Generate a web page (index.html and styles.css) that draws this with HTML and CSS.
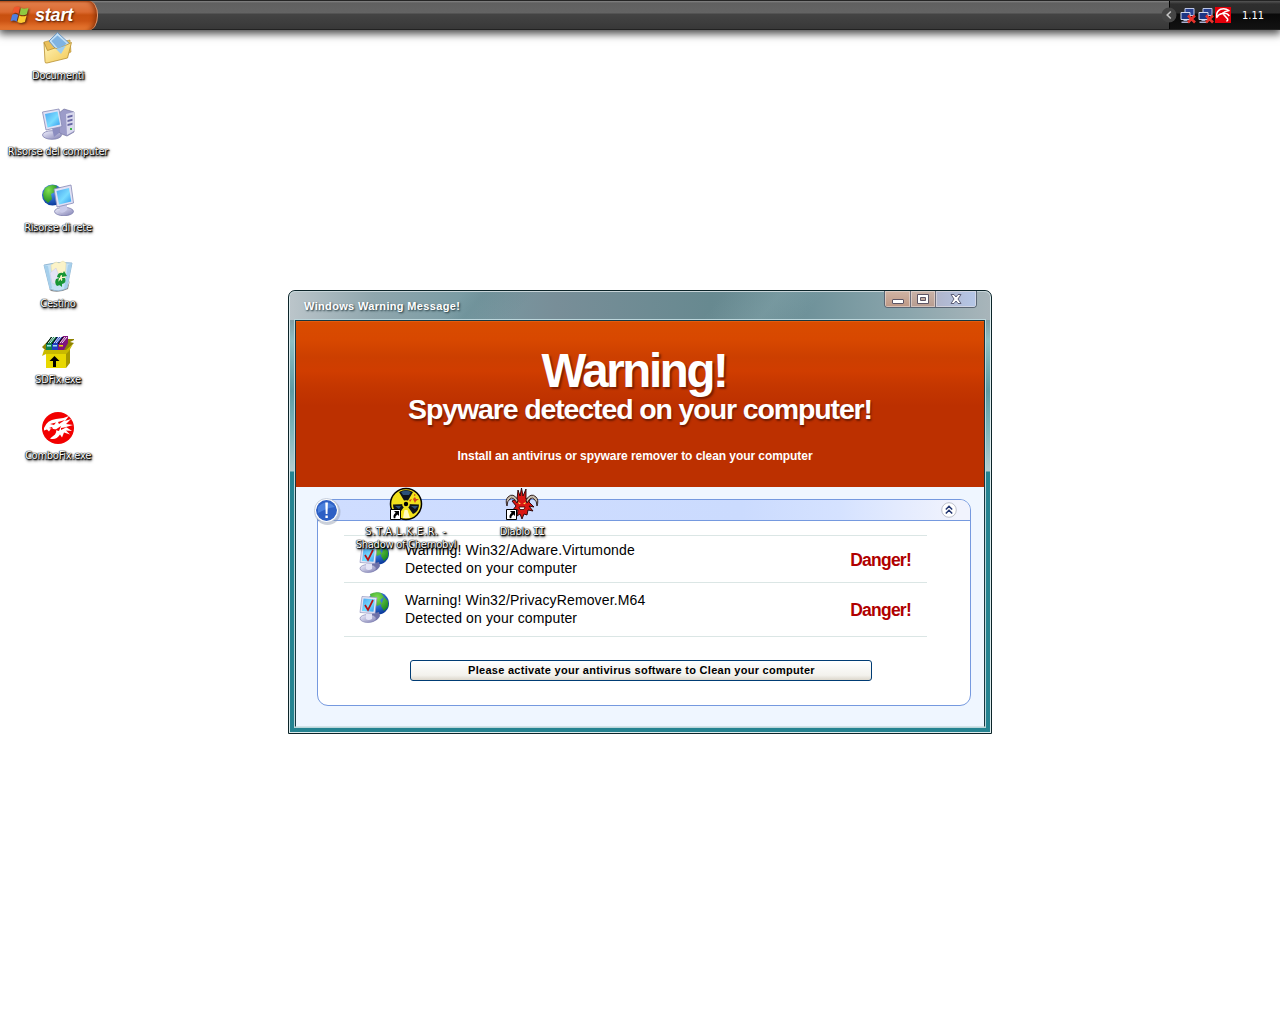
FILE: index.html
```html
<!DOCTYPE html>
<html lang="it">
<head>
<meta charset="utf-8">
<title>Desktop</title>
<link rel="stylesheet" href="styles.css">
</head>
<body>
<svg class="defs" width="0" height="0" aria-hidden="true">
  <defs>
    <linearGradient id="screen" x1="0" y1="0" x2="1" y2="1"><stop offset="0" stop-color="#4aa6f0"/><stop offset=".55" stop-color="#79dcff"/><stop offset="1" stop-color="#2f98ee"/></linearGradient>
    <linearGradient id="metal" x1="0" y1="0" x2="1" y2="1"><stop offset="0" stop-color="#f4f4ff"/><stop offset="1" stop-color="#8080b4"/></linearGradient>
    <radialGradient id="globe" cx=".4" cy=".3" r=".7"><stop offset="0" stop-color="#58a4ff"/><stop offset="1" stop-color="#0a3a9c"/></radialGradient>
    <radialGradient id="land" cx=".4" cy=".3" r=".8"><stop offset="0" stop-color="#7fe04f"/><stop offset="1" stop-color="#17841f"/></radialGradient>
    <linearGradient id="folder" x1="0" y1="0" x2="1" y2="1"><stop offset="0" stop-color="#fff6bd"/><stop offset="1" stop-color="#f2c650"/></linearGradient>
    <symbol id="tray-net" viewBox="0 0 17 17">
      <path d="M5.500 1.500h9v7h-9z" fill="#27408f" stroke="#bcc5e4"/>
      <path d="M7 10h6v1H7z" fill="#9aa2c8"/>
      <path d="M1.500 5.500h9v7h-9z" fill="#1d3684" stroke="#d3d9ef"/>
      <path d="M4 13h4v1H4zM2 14.500h8v1.500H2z" fill="#a9b0d2"/>
      <path d="M8.500 8.500l7 7m0-7l-7 7" stroke="#e8332c" stroke-width="2.600"/>
    </symbol>
    <symbol id="globe-check" viewBox="0 0 32 32">
      <circle cx="20" cy="12.500" r="11" fill="url(#globe)"/>
      <path d="M12 3q6-3 11-1l3 4-4 3 2 4-5 2-5-4zM26 6l4 4v6l-4 4-3-5z" fill="url(#land)"/>
      <path d="M12 23l9-2 1 4q-2 5-9 6z" fill="#6d71a8"/>
      <ellipse cx="10" cy="27.500" rx="8" ry="4" fill="url(#metal)" stroke="#8587b5" stroke-width=".7"/>
      <path d="M8 20h6v8q-4 2-6 0z" fill="#e4e4f6"/>
      <path d="M4 5.500l15 1-2 16-15-1z" fill="#e5e6f6" stroke="#9294bd" stroke-width=".7"/>
      <path d="M5.500 7.500l11.500.7-1.500 12.500-11.500-.8z" fill="url(#screen)"/>
      <path d="M7 14l3 5 5-10" fill="none" stroke="#b71212" stroke-width="1.700"/>
    </symbol>
    <symbol id="shortcut" viewBox="0 0 11 11">
      <path d="M.5.5h10v10H.5z" fill="#fff" stroke="#000"/>
      <path d="M4 2h5v5L7.400 5.400Q5 7 5.300 9.200H3.800Q2.600 6 5.700 3.700z" fill="#000"/>
    </symbol>
  </defs>
</svg>

<header class="taskbar">
  <div class="start">
    <svg class="flag" width="20" height="18" viewBox="0 0 20 18">
      <path d="M4 1.500Q7.500-.5 10 1.500L8.500 8Q6 6 2.500 7.500z" fill="#f0562c"/>
      <path d="M11 2q3 1.600 7.500-.3L16.800 8.300q-3.700 1.700-7.300.1z" fill="#8fc940"/>
      <path d="M2.200 8.700q3.300-1.700 6 .2L6.600 15.700Q4 13.600.5 15.300z" fill="#4f7fe0"/>
      <path d="M9.200 9.500q3.600 1.700 7.400 0l-1.700 6.600q-4 1.700-7.500-.2z" fill="#fccb31"/>
    </svg>
    <span class="start-label">start</span>
  </div>
  <div class="tray">
    <svg class="chevron" width="16" height="16" viewBox="0 0 16 16"><circle cx="8" cy="8" r="7.500" fill="#454545"/><path d="M9.800 4.500L6.200 8l3.600 3.500" fill="none" stroke="#c4c4c4" stroke-width="1.600"/></svg>
    <svg width="18" height="17"><use href="#tray-net"/></svg>
    <svg width="18" height="17"><use href="#tray-net"/></svg>
    <svg width="16" height="16" viewBox="0 0 16 16"><path d="M0 0h16v16H0z" fill="#e2000b"/><path d="M1.800 10.500Q.8 4.500 5.500 2.300 10 .8 14 3.500 9.500 4.300 7.300 6.500 3.500 7 1.800 10.500z" fill="none" stroke="#fff" stroke-width="1.500" stroke-linejoin="round"/><path d="M7.300 6.500Q12 5.500 14.300 9M8 6.800l4.600 5.200q.6 1.800-1.300 2" fill="none" stroke="#fff" stroke-width="1.500"/></svg>
    <span class="clock">1.11</span>
  </div>
</header>

<nav class="icons">
  <div class="icon">
    <svg width="32" height="32" viewBox="0 0 32 32">
      <path d="M2 10l8-2 4 3 14-3 1 12-22 10z" fill="#eac05a" stroke="#b58d31" stroke-width=".6"/>
      <path d="M15.500.7L28 12 18 22 7 9z" fill="#c3e0f6" stroke="#5f8fc0" stroke-width=".9"/>
      <path d="M15.500 3.500l9 8-7 7-8-9.500z" fill="#7fb3e2"/>
      <path d="M2 10.500l3.500 8L13 16l3 1 13.500-6.500-4 15.500L5 31q-2 .5-2-1.500z" fill="url(#folder)" stroke="#b88f31" stroke-width=".8"/>
      <path d="M14 17l10-3.500L19 22z" fill="#9ccdf0"/>
    </svg>
    <span class="label">Documenti</span>
  </div>
  <div class="icon">
    <svg width="34" height="32" viewBox="0 0 34 32">
      <path d="M18 5l5-4 10 3v20l-7 4-8-3z" fill="#9c9cc9" stroke="#74749f" stroke-width=".7"/>
      <path d="M25 6l8-2v19l-7 4z" fill="#d9d9ee"/>
      <path d="M26.500 8l5-1.200v2l-5 1.200zm0 4l5-1.200v2l-5 1.200zm0 4l5-1.200v2l-5 1.200z" fill="#6868a3"/>
      <path d="M29 20h2v2h-2z" fill="#3db54a"/>
      <ellipse cx="11" cy="27" rx="9.500" ry="4.300" fill="url(#metal)" stroke="#7f80ae" stroke-width=".8"/>
      <path d="M11 20l7-1v6l-5 4z" fill="#8b8dc0"/>
      <path d="M1.500 4L18 1l3 17.500L5 22z" fill="#e0e1f5" stroke="#8688b4" stroke-width=".8"/>
      <path d="M4 6L16.500 3.500 19 16.500 6.500 19.500z" fill="url(#screen)"/>
    </svg>
    <span class="label">Risorse del computer</span>
  </div>
  <div class="icon">
    <svg width="34" height="32" viewBox="0 0 34 32">
      <circle cx="11.500" cy="11" r="10.500" fill="url(#globe)"/>
      <path d="M4 4q6-5 12-2l-2 6-4 2 1 5-4 4-4-4-1-5z" fill="url(#land)"/>
      <ellipse cx="23" cy="27.500" rx="9.500" ry="4.200" fill="url(#metal)" stroke="#7f80ae" stroke-width=".8"/>
      <path d="M19 21l7-2v7q-4 4-7 2z" fill="#c9caea"/>
      <path d="M13 5l17-4 2.500 18-16.500 4z" fill="#e0e1f5" stroke="#8688b4" stroke-width=".8"/>
      <path d="M15.500 7L28 4l2.300 13.500L18 20.500z" fill="url(#screen)"/>
    </svg>
    <span class="label">Risorse di rete</span>
  </div>
  <div class="icon">
    <svg width="32" height="32" viewBox="0 0 32 32">
      <path d="M7 29q10 4 18-1l3-8-2 9q-8 4-17 2z" fill="#8a8a8a"/>
      <path d="M2 5q14-4 28-2l-5 25q-8 5-17 1z" fill="#c5e2f6" stroke="#83abc9" stroke-width=".8"/>
      <path d="M9 5l5-3 3 1 4-2 3 2-1 16-7 4-6-7z" fill="#fbf3c8" stroke="#e2d8a5" stroke-width=".5"/>
      <path d="M8 13l6-5 3 8-2 9-5-2z" fill="#e4e4f5" stroke="#c2c2de" stroke-width=".4"/>
      <path d="M2 5l4 1 4 22-2 1zM30 3l-4 2-4 24 3-1z" fill="#a5cfec"/>
      <path d="M15 17q1-5 6-4l1-2 3 5-5 1v-2q-2 0-2 3zm8 1q2 5-3 6v3l-5-4 4-4v2q2 0 1-3zM14 19l3-1-1 5q1 2 2 2l-3 1q-3-3-1-7z" fill="#179635"/>
    </svg>
    <span class="label">Cestino</span>
  </div>
  <div class="icon">
    <svg width="32" height="32" viewBox="0 0 32 32">
      <path d="M5 6L0 11l4 4h20l8-8-4-1 4-2V3H8z" fill="#8f8300"/>
      <path d="M4 8l5-7h6l-5 7v6H4z" fill="#10804a"/>
      <path d="M10 8l5-7h6l-5 7v6h-6z" fill="#203fc0"/>
      <path d="M16 8l5-8h5v7l-4 7h-6z" fill="#81117d"/>
      <path d="M6 7l5-6M8 7l5-6M12 7l5-6M14 7l5-6M18 7l5-6M20 7l5-6" stroke="#fff" stroke-width=".9"/>
      <path d="M4.500 8l5-7M10 8l5-7M16 8l5-7" stroke="#000" stroke-width="1"/>
      <path d="M5 9h4v1.500H5zm6 0h4v1.500h-4z" fill="#9fe1ef"/><path d="M17 9h4v1.500h-4z" fill="#e8d800"/>
      <path d="M4 16h20v16H4z" fill="#e8d800"/><path d="M24 16l4-4v15l-4 5z" fill="#a59800"/>
      <path d="M2 14h22l7-6-4 7-3 3H4l-4 2z" fill="#c8b900"/>
      <path d="M12.500 20l5 5h-3.500v6h-3v-6H7.500z" fill="#000"/>
    </svg>
    <span class="label">SDFix.exe</span>
  </div>
  <div class="icon">
    <svg width="32" height="32" viewBox="0 0 32 32">
      <circle cx="16" cy="16" r="16" fill="#f20000"/>
      <path d="M2 16Q5 8 14 7q7 0 13-3l-4 5 6-2-5 5 7 1-7 2 6 4-6-.5 4 4-6-2-2 5-2-3q-4 6-10 4l5-4q2-2 1-5l-5-1-2 3-2-2-3 1z" fill="#fff"/>
      <path d="M8 12l6-1.500-2 2.500zM13 18l6-4-2 5zM16 10l7-2-6 4zM19 16l6-1-6 3zM7 16l3-1 1 2z" fill="#f20000"/>
    </svg>
    <span class="label">ComboFix.exe</span>
  </div>
</nav>

<main class="window">
  <div class="titlebar">
    <h1 class="title">Windows Warning Message!</h1>
    <div class="controls">
      <span class="ctl warm"><svg width="14" height="12" viewBox="0 0 14 12"><rect x="1.500" y="6.500" width="11" height="4" rx=".5" fill="#fff" stroke="#5d5564"/></svg></span>
      <span class="ctl mid"><svg width="14" height="12" viewBox="0 0 14 12"><path d="M1.500 1.500h11v9h-11zM4.500 4.500v3h5v-3z" fill="#fff" fill-rule="evenodd" stroke="#5d5564"/></svg></span>
      <span class="ctl cool"><svg width="14" height="12" viewBox="0 0 14 12"><path d="M2 1.500h3l2 2.500 2-2.500h3L9 6l3 4.500H9L7 8l-2 2.500H2L5 6z" fill="#fff" stroke="#5d5f78"/></svg></span>
    </div>
  </div>
  <div class="content">
    <section class="banner">
      <h2 class="warning">Warning!</h2>
      <p class="detected">Spyware detected on your computer!</p>
      <p class="install">Install an antivirus or spyware remover to clean your computer</p>
    </section>
    <section class="panel">
      <div class="panel-head">
        <svg class="info" width="28" height="28" viewBox="0 0 28 28"><circle cx="14.500" cy="15" r="13" fill="#8d99ad" opacity=".45"/><circle cx="13.500" cy="13.500" r="12" fill="#fff" stroke="#b8c1d2" stroke-width=".8"/><circle cx="13.500" cy="13.500" r="10.400" fill="#2d5fc4"/><path d="M5 10q8-9 17 0-8 1-17 6z" fill="#4b80dc"/><path d="M12.300 5.500h2.600l-.4 11.500h-1.800zM12.400 18.500h2.400v2.500h-2.400z" fill="#fff"/></svg>
        <svg class="collapse" width="16" height="16" viewBox="0 0 16 16"><circle cx="8" cy="8" r="7.300" fill="#fff" stroke="#bdc0cb"/><path d="M4.800 7.500L8 4.300l3.200 3.200M4.800 11.500L8 8.300l3.200 3.200" fill="none" stroke="#20346f" stroke-width="1.500"/></svg>
      </div>
      <div class="rows">
        <div class="row first">
          <svg width="32" height="32"><use href="#globe-check"/></svg>
          <p class="threat">Warning! Win32/Adware.Virtumonde<br>Detected on your computer</p>
          <strong class="danger">Danger!</strong>
        </div>
        <div class="row second">
          <svg width="32" height="32"><use href="#globe-check"/></svg>
          <p class="threat">Warning! Win32/PrivacyRemover.M64<br>Detected on your computer</p>
          <strong class="danger">Danger!</strong>
        </div>
      </div>
      <button class="activate">Please activate your antivirus software to Clean your computer</button>
    </section>
  </div>
</main>

<div class="icon floating stalker">
  <svg width="34" height="34" viewBox="0 0 34 34">
    <circle cx="17" cy="17" r="15.500" fill="#f2e21c" stroke="#000" stroke-width="1.500"/>
    <path d="M17 17L10 5q7-4 14 0zM17 17L4 17.500q0 7 6 9.500zM17 17l13 .5q0 7-6 9.500z" fill="#10141a"/>
    <path d="M12 5q5-3 10 0l-2 3h-6zM6 19l6 0-2 3zM22 19l7 0-3 3z" fill="#2b5079"/>
    <circle cx="17" cy="17" r="3.800" fill="#f2e21c"/><circle cx="17" cy="17" r="2.200" fill="#000"/>
    <path d="M24 12l2-2 1 2 3 0-3 2-1 2zM20 13l3-1-2 3zM25 7l2 1-2 1z" fill="#d1491d"/>
    <path d="M15.500 23h3l2.500 8h-7z" fill="#fffbc0"/>
    <use href="#shortcut" x="1" y="22" width="11" height="11"/>
  </svg>
  <span class="label"><span class="spaced">S.T.A.L.K.E.R. -</span><br>Shadow of Chernobyl</span>
</div>
<div class="icon floating diablo">
  <svg width="34" height="34" viewBox="0 0 34 34">
    <path d="M12 12L13 3l2 6 1.500-8L18 9l3-7 0 10 5-2-2 5 5 5-5-1 4 5-5-1-1 5-3-1-2 5-2-5-3 2 1-6-6 1 4-5-4-5z" fill="#d91713" stroke="#240000" stroke-width=".9"/>
    <path d="M12 16Q8 9 5 12q-3 2-3 7-2-6 1-9 5-5 10 3zM22 16q4-7 7-4 3 2 3 7 2-6-1-9-5-5-10 3z" fill="#c9bfae" stroke="#201010" stroke-width=".9"/>
    <path d="M13 15l3 1.500-2 .8zM21 15l-3 1.500 2 .8z" fill="#ffe65b"/>
    <path d="M14 20h6l-1 2.500h-4z" fill="#fff" stroke="#300" stroke-width=".8"/>
    <use href="#shortcut" x="1" y="22" width="11" height="11"/>
  </svg>
  <span class="label">Diablo <span class="numeral">II</span></span>
</div>
</body>
</html>
```
FILE: styles.css
```css
* { box-sizing: border-box; }
body {
  margin: 0;
  height: 1024px;
  overflow: hidden;
  background: #fff;
  font-family: "Liberation Sans", Arial, sans-serif;
  color: #000;
}
h1, h2, p { margin: 0; }
svg { display: block; flex: none; }
.defs { position: absolute; }

/* Taskbar */
.taskbar {
  display: flex;
  justify-content: space-between;
  height: 30px;
  border-top: 1px solid #242424;
  border-bottom: 1px solid #222;
  background: linear-gradient(#858585 0, #606060 2px, #646464 12px, #444 13px, #383838 100%);
  box-shadow: 0 3px 8px 1px rgba(0, 0, 0, .7);
}
.start {
  display: flex;
  align-items: center;
  width: 98px;
  height: 29px;
  padding-left: 10px;
  gap: 5px;
  border-right: 1px solid #e39a70;
  border-radius: 0 9px 9px 0 / 0 14px 14px 0;
  background: linear-gradient(#b8501c 0, #e07c48 2px, #dc6a30 11px, #c8500f 14px, #cc5414 20px, #ee7f38 100%);
  box-shadow: inset -4px 0 5px -2px #8a3208;
}
.flag { margin-top: -2px; filter: drop-shadow(1px 1px 1px rgba(0, 0, 0, .6)); }
.start-label {
  margin-top: -2px;
  font: italic bold 18px/20px "Liberation Sans", Arial, sans-serif;
  letter-spacing: -.2px;
  color: #fff;
  text-shadow: 1px 1px 2px #4b1b00;
}
.tray {
  display: flex;
  align-items: center;
  width: 111px;
  height: 28px;
  border-left: 1px solid #050505;
  background: linear-gradient(#555 0, #2e2e2e 3px, #2c2c2c 12px, #090909 13px, #121212 100%);
}
.chevron { margin: 0 2px 0 -9px; }
.clock {
  margin: 1px 0 0 11px;
  font: 11px/14px "DejaVu Sans Condensed", "DejaVu Sans", sans-serif;
  color: #fff;
}

/* Desktop icons */
.icons { display: flex; flex-direction: column; width: 116px; padding-top: 2px; }
.icon { display: flex; flex-direction: column; align-items: center; height: 76px; position: relative; }
.label {
  margin-top: 5px;
  font: 11px/13px "DejaVu Sans Condensed", "DejaVu Sans", sans-serif;
  letter-spacing: -.25px;
  text-align: center;
  white-space: nowrap;
  color: #fff;
  text-shadow: 0 0 1px #000, 0 0 1px #000, 1px 1px 1px #000, 1px 1px 2px #000, 1px 2px 3px rgba(0, 0, 0, .8);
}
.spaced { letter-spacing: .65px; }
.numeral { font-family: "DejaVu Sans Mono", monospace; letter-spacing: -.8px; }
.floating { position: absolute; top: 487px; width: 116px; }
.floating .label { margin-top: 4px; }
.stalker { left: 348px; }
.diablo { left: 464px; }

/* Warning window */
.window {
  position: absolute;
  left: 288px;
  top: 290px;
  width: 704px;
  height: 444px;
  padding: 0 6px 6px;
  border: 1px solid #0c2429;
  border-radius: 7px 7px 0 0;
  background: linear-gradient(#9fb1b8 0, #829da5 28px, #8dbfc3 50px, #5d9ba4 100px, #7eb7bb 140px, #b3cdd0 180px, #258391 181px, #258391 100%);
  box-shadow: inset 0 0 0 1px #dcebed;
}
.titlebar {
  display: flex;
  justify-content: space-between;
  height: 29px;
  margin: 0 -5px;
  padding: 0 13px 0 14px;
  border-top: 1px solid #c8d5d9;
  border-radius: 6px 6px 0 0;
  background:
    linear-gradient(130deg, transparent 24%, rgba(80, 120, 127, .2) 27%, transparent 34%, transparent 60%, rgba(180, 207, 210, .15) 68%, transparent 74%),
    linear-gradient(90deg, #bbc5ca 0, #8fa6ad 12%, #799ba3 25%, #788e98 38%, #678990 60%, #6f929a 74%, #8aa5ac 88%, #a8b5ba 100%);
}
.title {
  padding-top: 8px;
  font-size: 11px;
  line-height: 13px;
  letter-spacing: .34px;
  color: #fff;
  text-shadow: 1px 1px 2px #1e343b;
}
.controls {
  display: flex;
  width: 93px;
  height: 17px;
  margin-top: -1px;
  border: 1px solid #596674;
  border-top: 0;
  border-radius: 0 0 4px 4px;
  overflow: hidden;
}
.ctl { display: flex; justify-content: center; align-items: center; width: 25px; box-shadow: inset 0 0 0 1px rgba(240, 232, 230, .5); }
.ctl + .ctl { border-left: 1px solid #6f6e7a; }
.warm { background: linear-gradient(#d0b4a4, #bd9885); }
.mid { background: linear-gradient(#cab3a8, #b79c90); }
.cool { flex: 1; background: linear-gradient(90deg, #b0b5cb, #b5c7e7); }
.content {
  height: 407px;
  border: 1px solid #16363f;
  border-bottom-color: #d2e4e8;
  background: #eff6ff;
  box-shadow: 0 0 0 1px #bcd6db;
}
.banner {
  height: 166px;
  padding-top: 25px;
  background: linear-gradient(#f06a18 0, #d94c00 1px, #d84800 18px, #cc3f00 36px, #d03d00 50px, #c53700 64px, #bc3000 85px, #bc3000 100%);
  text-align: center;
  color: #fff;
}
.warning {
  padding-right: 12px;
  font-size: 47.500px;
  line-height: 50px;
  letter-spacing: -2.4px;
  text-shadow: 2px 2px 2px rgba(90, 20, 0, .7);
}
.detected {
  margin-top: -2px;
  font-size: 28.500px;
  line-height: 30px;
  letter-spacing: -1.12px;
  font-weight: bold;
  text-shadow: 1px 2px 2px rgba(90, 20, 0, .8);
}
.install { margin: 25px 10px 0 0; font-size: 12px; line-height: 14px; letter-spacing: -.06px; font-weight: bold; }

.panel {
  display: flex;
  flex-direction: column;
  width: 654px;
  height: 207px;
  margin: 12px 0 0 21px;
  border: 1px solid #7599df;
  border-radius: 11px;
  background: #fff;
}
.panel-head {
  display: flex;
  align-items: center;
  justify-content: space-between;
  height: 21px;
  padding-right: 13px;
  border-bottom: 1px solid #7599df;
  border-radius: 10px 10px 0 0;
  background: linear-gradient(90deg, #cfddff 0, #cbdbfe 65%, #d5e2ff 80%, #f1f3fd 98%);
}
.info { margin: 1px 0 0 -5px; }
.rows { width: 583px; margin: 14px 0 0 26px; border-top: 1px solid #dbe6e5; }
.row { display: flex; border-bottom: 1px solid #dbe6e5; padding: 0 16px 0 14px; }
.row.first { height: 47px; padding-top: 5px; }
.row.second { height: 54px; padding-top: 8px; }
.threat { flex: 1; padding-left: 15px; font-size: 14px; line-height: 18px; letter-spacing: .13px; }
.danger { margin-top: 9px; font-size: 17.500px; line-height: 20px; letter-spacing: -.75px; color: #b00000; }
.activate {
  align-self: flex-start;
  width: 462px;
  height: 21px;
  margin: 23px 0 0 92px;
  padding: 0 0 1px;
  border: 1px solid #003c74;
  border-radius: 3px;
  background: linear-gradient(#fff, #f3f2ed 75%, #dcd7cc);
  font: bold 11px/18px "Liberation Sans", Arial, sans-serif;
  letter-spacing: .28px;
  text-indent: 1px;
  color: #000;
}
```
